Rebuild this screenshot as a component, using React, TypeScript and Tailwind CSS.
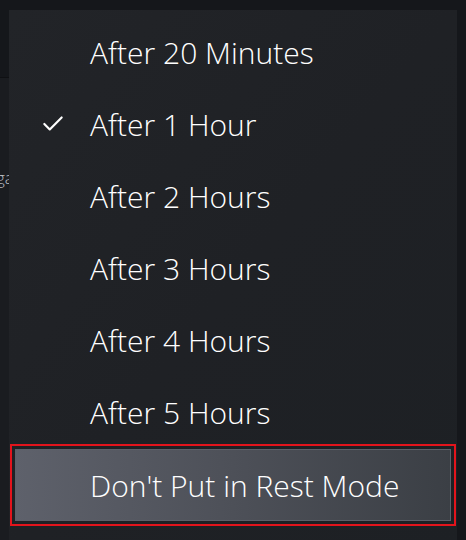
import { Check } from "lucide-react";

const OPTIONS = [
  "After 20 Minutes",
  "After 1 Hour",
  "After 2 Hours",
  "After 3 Hours",
  "After 4 Hours",
  "After 5 Hours",
  "Don't Put in Rest Mode",
];

const SELECTED = "After 1 Hour";
const FOCUSED = "Don't Put in Rest Mode";

export default function App() {
  return (
    <div
      className="flex h-[540px] w-[466px] overflow-hidden bg-[#15171b] text-white"
      style={{ fontFamily: '"Open Sans", "Noto Sans", sans-serif' }}
    >
      {/* page behind the menu */}
      <div className="mt-[77px] w-[9px] shrink-0 overflow-hidden border-t border-[#0f1013] bg-[#1a1c20]">
        <span className="ml-[-4px] mt-[87px] block text-[17px] font-light text-[#b8bbc0]">ga</span>
      </div>

      <div className="mt-[10px] h-[540px] w-[448px] shrink-0 bg-gradient-to-br from-[#222428] via-[#1f2125] to-[#1d2024] pt-[6px]">
        <ul className="flex flex-col">
          {OPTIONS.map((label) => {
            const focused = label === FOCUSED;
            return (
              <li key={label} className="h-[72px]">
                {focused ? (
                  <div className="mx-[1px] -mt-[4px] h-[82px] border-2 border-[#e3141c] p-[3px]">
                    <div className="flex h-full items-center border border-[#5c6069] bg-gradient-to-r from-[#5e616b] via-[#4d5058] to-[#3b3f45] pl-[74px] text-[30px] font-light">
                      {label}
                    </div>
                  </div>
                ) : (
                  <div className="flex h-full items-center text-[30px] font-light">
                    <span className="flex w-[81px] justify-start pl-[31px]">
                      {label === SELECTED && <Check size={26} strokeWidth={2} className="text-white" />}
                    </span>
                    {label}
                  </div>
                )}
              </li>
            );
          })}
        </ul>
      </div>
    </div>
  );
}
